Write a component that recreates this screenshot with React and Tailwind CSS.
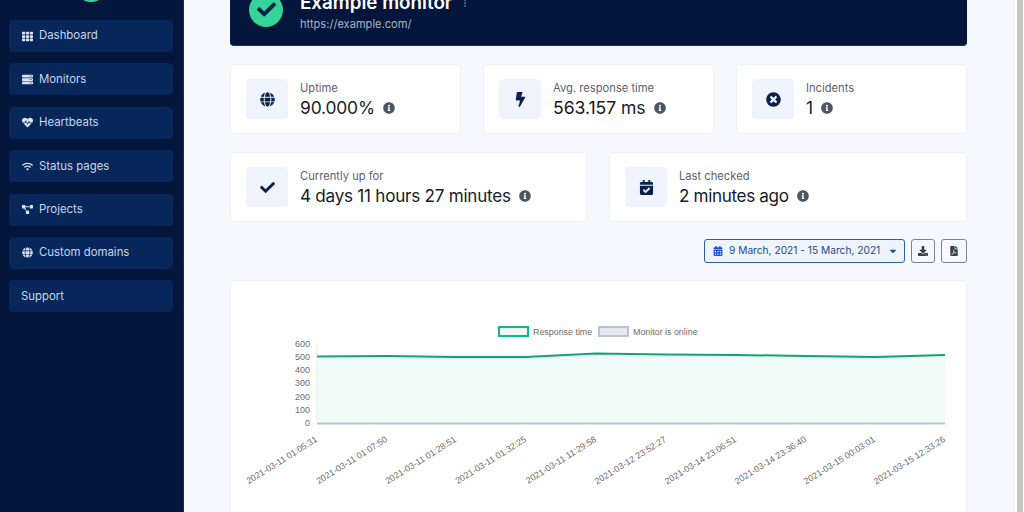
import React from "react";
import { FaTh, FaServer, FaHeartbeat, FaWifi, FaProjectDiagram, FaGlobe, FaCheck, FaBolt, FaTimesCircle, FaCalendarCheck, FaCalendarAlt, FaCaretDown, FaDownload, FaFilePdf, FaInfoCircle, FaEllipsisV } from "react-icons/fa";

const nav = [
  ["Dashboard", FaTh],
  ["Monitors", FaServer],
  ["Heartbeats", FaHeartbeat],
  ["Status pages", FaWifi],
  ["Projects", FaProjectDiagram],
  ["Custom domains", FaGlobe],
  ["Support", null],
];

function Stat({ icon: Icon, label, value, valueClass }) {
  return (
    <div className="flex h-[70px] items-center rounded border border-[#eef2f8] bg-white pl-[15px]">
      <div className="flex h-[40px] w-[42px] shrink-0 items-center justify-center rounded bg-[#eff4fc] text-[#0a2049]">
        <Icon className="text-[15px]" />
      </div>
      <div className="ml-3 flex flex-col pt-px">
        <div className="text-[11.2px] leading-[17px] text-[#5c6470]">{label}</div>
        <div className={"flex items-center leading-[22px] text-[#161b26] " + valueClass}>
          {value}
          <FaInfoCircle className="ml-[8px] text-[12px] text-[#4b5563]" />
        </div>
      </div>
    </div>
  );
}

const xs = [317, 387, 456, 526, 596, 666, 736, 806, 875, 945];
const ys = [356.5, 356, 357, 357, 353.5, 354.5, 355, 356, 357, 355];
const labels = [
  "2021-03-11 01:05:31", "2021-03-11 01:07:50", "2021-03-11 01:28:51", "2021-03-11 01:32:25", "2021-03-11 11:29:58",
  "2021-03-12 23:52:27", "2021-03-14 23:06:51", "2021-03-14 23:36:40", "2021-03-15 00:03:01", "2021-03-15 12:33:26",
];
const ticks = [600, 500, 400, 300, 200, 100, 0];
const line = xs.map((x, i) => x + "," + ys[i]).join(" ");

function Chart() {
  return (
    <svg width="1024" height="232" viewBox="0 280 1024 232" className="absolute left-[-231px] top-[-1px]" style={{ fontFamily: "'Liberation Sans', sans-serif" }}>
      <rect x="499" y="327" width="29" height="9" fill="#edf9f5" stroke="#10b981" strokeWidth="2" />
      <text x="533" y="335" fontSize="8.9" fill="#6b6b6b">Response time</text>
      <rect x="599" y="327" width="29" height="9" fill="#e3e8f1" stroke="#b9c2cf" strokeWidth="2" />
      <text x="633" y="335" fontSize="8.9" fill="#6b6b6b">Monitor is online</text>
      <line x1="317" y1="343" x2="317" y2="423" stroke="#e5e5e5" />
      {ticks.map((t, i) => (
        <text key={t} x="310" y={346.5 + i * 13.3} textAnchor="end" fontSize="9" fill="#6b6b6b">{t}</text>
      ))}
      <polygon points={line + " 945,423 317,423"} fill="#f0faf7" />
      <polyline points={line} fill="none" stroke="#10a37a" strokeWidth="2" />
      <line x1="317" y1="423.5" x2="945" y2="423.5" stroke="#b4c6d0" strokeWidth="2" />
      {labels.map((l, i) => (
        <text key={l} x={xs[i] + 1} y="441" textAnchor="end" fontSize="8.9" fill="#6b6b6b" transform={`rotate(-32 ${xs[i] + 1} 441)`}>{l}</text>
      ))}
    </svg>
  );
}

export default function App() {
  return (
    <div className="flex h-[512px] w-[1024px] overflow-hidden bg-white font-['Inter',sans-serif]">
      <aside className="flex h-full w-[184px] shrink-0 flex-col items-center border-r border-[#1c2a44] bg-[#04163c] pr-px">
        <div className="mt-[-32px] h-[34px] w-[34px] shrink-0 rounded-full bg-[#34d399]" />
        <nav className="mt-[18px] flex w-[164px] flex-col gap-[11.4px]">
          {nav.map(([name, Icon]) => (
            <div key={name} className="flex h-[32px] items-center rounded bg-[#072659] pl-[12px] text-[11.4px] text-[#c8d6ef]">
              {Icon && (
                <span className="mr-[6px] flex w-[12px] justify-center text-[11px] text-[#dbe4f5]">
                  <Icon />
                </span>
              )}
              {name}
            </div>
          ))}
        </nav>
      </aside>
      <main className="flex h-full min-w-0 flex-1 flex-col bg-[#f5f8fc] px-[46px]">
        <header className="mt-[-26px] flex h-[72px] shrink-0 items-center rounded-b border-b border-[#20304f] bg-[#04163c] pl-[19px]">
          <div className="flex h-[34px] w-[34px] items-center justify-center rounded-full bg-[#34d399] text-[#0a2049]">
            <FaCheck className="text-[19px]" />
          </div>
          <div className="ml-[17px] mt-[3px]">
            <div className="flex items-center whitespace-nowrap text-[18.8px] font-semibold leading-[26px] text-white">
              Example monitor
              <FaEllipsisV className="ml-[9px] text-[8px] text-[#4c5a73]" />
            </div>
            <div className="text-[11.1px] leading-[16px] text-[#a9b4c6]">https://example.com/</div>
          </div>
        </header>
        <div className="mt-[18px] grid shrink-0 grid-cols-3 gap-[22px]">
          <Stat icon={FaGlobe} label="Uptime" value="90.000%" valueClass="text-[17.4px] tracking-[-0.15px]" />
          <Stat icon={FaBolt} label="Avg. response time" value="563.157 ms" valueClass="text-[17.6px] tracking-[-0.05px]" />
          <Stat icon={FaTimesCircle} label="Incidents" value="1" valueClass="text-[17.4px]" />
        </div>
        <div className="mt-[18px] grid shrink-0 grid-cols-[357px_1fr] gap-[22px]">
          <Stat icon={FaCheck} label="Currently up for" value="4 days 11 hours 27 minutes" valueClass="text-[17.1px] tracking-[-0.25px]" />
          <Stat icon={FaCalendarCheck} label="Last checked" value="2 minutes ago" valueClass="text-[17.1px] tracking-[-0.35px]" />
        </div>
        <div className="mt-[17px] flex shrink-0 justify-end gap-[6px]">
          <div className="flex h-[24px] w-[201px] items-center whitespace-nowrap rounded-[3px] border border-[#2b5ea7] bg-[#eff4fc] pl-[8px] text-[10.2px] text-[#21488a]">
            <FaCalendarAlt className="mr-[6px] text-[10px] text-[#1d4ed8]" />
            9 March, 2021 - 15 March, 2021
            <FaCaretDown className="ml-[8px] text-[10px]" />
          </div>
          <div className="flex h-[24px] w-[24px] items-center justify-center rounded-[3px] border border-[#7b8390] text-[#374151]">
            <FaDownload className="text-[10px]" />
          </div>
          <div className="flex h-[24px] w-[26px] items-center justify-center rounded-[3px] border border-[#7b8390] text-[#374151]">
            <FaFilePdf className="text-[10px]" />
          </div>
        </div>
        <div className="relative mt-[17px] min-h-[240px] shrink-0 rounded border border-[#eef2f8] bg-white">
          <Chart />
        </div>
      </main>
      <div className="flex h-full w-[11px] shrink-0 justify-center border-l border-[#e6e9ef] bg-white pl-[2px] pr-[1px]">
        <div className="h-full w-[6px] bg-[#c4c4c4]" />
      </div>
    </div>
  );
}
